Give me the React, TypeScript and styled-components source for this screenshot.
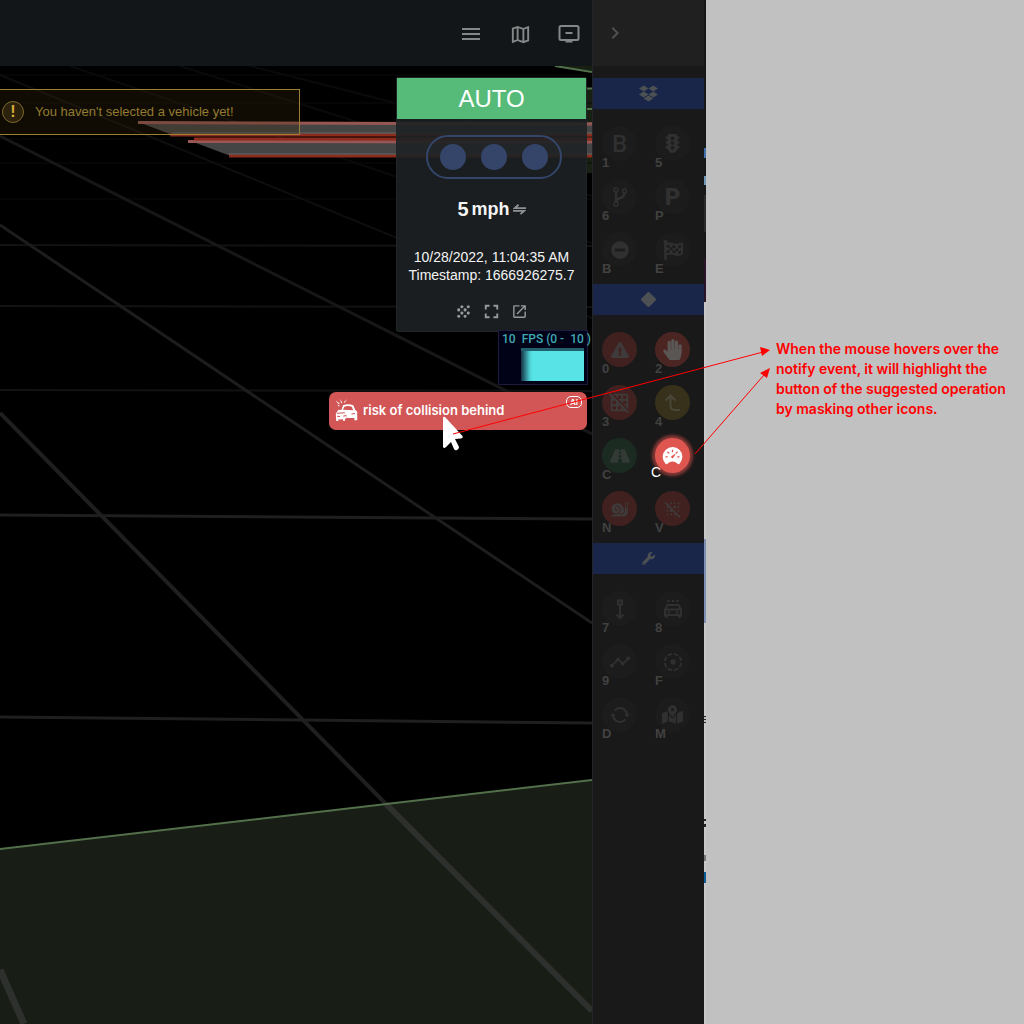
import React from 'react';
import styled, { createGlobalStyle, css } from 'styled-components';
import { MdMenu, MdOutlineMap, MdChevronRight, MdGrain, MdFullscreen, MdOpenInNew, MdGridOff, MdBlurOff, MdTimeline, MdFilterTiltShift } from 'react-icons/md';
import { FaDropbox, FaTrafficLight, FaMinusCircle, FaFlagCheckered, FaWrench, FaRoad, FaHandPaper, FaExclamationTriangle, FaMapMarkedAlt } from 'react-icons/fa';
import { BsDiamondFill } from 'react-icons/bs';
import { GiSnail } from 'react-icons/gi';
import { IoSpeedometer } from 'react-icons/io5';

const Global = createGlobalStyle`
  *, *::before, *::after { box-sizing: border-box; }
  body { margin: 0; background: #c1c1c1; font-family: "Liberation Sans", Arial, sans-serif; }
  button { padding: 0; border: 0; background: none; font: inherit; color: inherit; cursor: pointer; }
  svg { display: block; flex: none; }
`;

const Shell = styled.div`
  position: relative;
  display: grid;
  grid-template-columns: minmax(0, 1fr) 112px 2px 318px;
  min-height: 100vh;
  overflow: hidden;
`;

const Viewport = styled.main`
  position: relative;
  display: flex;
  flex-direction: column;
  background: #000;
  overflow: hidden;
`;

const Scene = styled.svg`
  position: absolute;
  inset: 0;
  width: 100%;
  height: 100%;
`;

const Toolbar = styled.header`
  position: relative;
  display: flex;
  align-items: center;
  justify-content: flex-end;
  gap: 25px;
  height: 66px;
  padding: 2px 11px 0 0;
  background: #121618;
  color: #858687;
`;

const ToolButton = styled.button`
  display: grid;
  place-items: center;
  width: 24px;
  height: 24px;
`;

const Hud = styled.div`
  position: relative;
  display: flex;
  justify-content: space-between;
  align-items: flex-start;
`;

const Warning = styled.div`
  display: flex;
  align-items: center;
  gap: 11px;
  width: 300px;
  height: 46px;
  margin-top: 23px;
  border: 1px solid #9a7f35;
  border-left: 0;
  background: rgba(58, 42, 12, 0.28);
  color: #947b31;
  font-size: 13px;
  line-height: 16px;
`;

const WarningMark = styled.span`
  display: grid;
  place-items: center;
  width: 22px;
  height: 22px;
  margin-left: 2px;
  border: 1px solid #7d682b;
  border-radius: 50%;
  background: #2b210c;
  color: #d9ae35;
  font-size: 16px;
  font-weight: 700;
`;

const Stack = styled.div`
  display: flex;
  flex-direction: column;
  align-items: flex-end;
  width: 260px;
  margin: 11px 5px 0 -228px;
`;

const StatusCard = styled.section`
  display: flex;
  flex-direction: column;
  align-items: center;
  width: 191px;
  height: 255px;
  border: 1px solid #202528;
  border-radius: 2px;
  background: rgba(29, 33, 35, 0.9);
  color: #f4f4f4;
`;

const Mode = styled.div`
  width: 100%;
  height: 41px;
  background: #56bb79;
  color: #fff;
  font-size: 24px;
  line-height: 41px;
  text-align: center;
`;

const Lamps = styled.div`
  display: flex;
  align-items: center;
  justify-content: center;
  gap: 15px;
  width: 136px;
  height: 44px;
  margin: 16px 0 0 4px;
  border: 2px solid #33466a;
  border-radius: 22px;
`;

const Lamp = styled.span`
  width: 26px;
  height: 26px;
  border-radius: 50%;
  background: #35456a;
`;

const Speed = styled.div`
  display: flex;
  align-items: center;
  gap: 3px;
  height: 24px;
  margin-top: 18px;
  font-size: 18px;
  font-weight: 700;
`;

const SpeedValue = styled.span`
  font-size: 20px;
`;

const Clock = styled.div`
  margin-top: 27px;
  font-size: 14px;
  line-height: 18px;
  text-align: center;
`;

const CardActions = styled.div`
  display: flex;
  align-items: center;
  gap: 4px;
  margin-top: 15px;
  color: #96989a;
`;

const CardAction = styled.button`
  display: grid;
  place-items: center;
  width: 24px;
  height: 24px;
`;

const Fps = styled.div`
  width: 90px;
  height: 55px;
  margin: -2px -1px 0 0;
  padding: 1px 3px 0;
  border: 1px solid #1d1b3c;
  background: #010118;
  color: #3fa9b1;
  font-family: Roboto, "Liberation Sans", sans-serif;
  font-size: 12px;
  font-weight: 500;
  line-height: 14px;
`;

const FpsLabel = styled.div`
  display: flex;
  gap: 6px;
  white-space: nowrap;
`;

const Meter = styled.div`
  width: 63px;
  height: 33px;
  margin: 2px 0 0 19px;
  border-top: 3px solid #23606e;
  background: linear-gradient(90deg, #123042, #4fd2d7 9px, #58e4e6 12px);
`;

const Notice = styled.button`
  display: flex;
  align-items: flex-start;
  width: 258px;
  height: 38px;
  margin: 7px 0 0;
  padding: 3px 5px 0 6px;
  border-radius: 7px;
  background: #d25656;
  color: #fff;
  font-family: Inter, "Liberation Sans", sans-serif;
  font-size: 13px;
  font-weight: 600;
  text-align: left;

  > svg { margin-top: 3px; }
`;

const NoticeText = styled.span`
  flex: 1;
  padding-left: 5px;
  line-height: 31px;
`;

const AiTag = styled.span`
  width: 16px;
  height: 12px;
  margin-top: 1px;
  border: 1px solid #fff;
  border-radius: 5px;
  font-size: 8px;
  line-height: 10px;
  text-align: center;
`;

const Sidebar = styled.aside`
  border-left: 1px solid #22252a;
  background: #191919;
`;

const SideTop = styled.div`
  display: flex;
  align-items: center;
  height: 66px;
  margin-bottom: 12px;
  padding-left: 10px;
  background: #202020;
  color: #505050;
`;

const SideHeading = styled.h2`
  display: grid;
  place-items: center;
  height: 31px;
  margin: 0;
  background: #19264a;
  color: #4d5154;
`;

const Keys = styled.div`
  display: grid;
  grid-template-columns: 35px 35px;
  grid-auto-rows: 35px;
  gap: 18px;
  padding: 17px 9px;
`;

type Tone = 'plain' | 'red' | 'hand' | 'gold' | 'green' | 'live';
const tones: Record<Tone, [string, string]> = {
  plain: ['#1c1c1c', '#303030'],
  red: ['#40211f', '#3e3b3a'],
  hand: ['#4b2522', '#5a5654'],
  gold: ['#37301a', '#494638'],
  green: ['#1b2b22', '#333a36'],
  live: ['#df5650', '#fff'],
};

const Key = styled.button<{ $tone: Tone }>`
  position: relative;
  display: grid;
  place-items: center;
  border-radius: 50%;
  background: ${p => tones[p.$tone][0]};
  color: ${p => tones[p.$tone][1]};
  ${p => p.$tone === 'live' && css`box-shadow: 0 0 3px 3px rgba(196, 76, 72, 0.62);`}
`;

const Hotkey = styled.kbd<{ $live?: boolean }>`
  position: absolute;
  left: 0;
  bottom: -9px;
  color: #414141;
  font: 700 13px/15px "Liberation Sans", Arial, sans-serif;
  ${p => p.$live && css`
    left: -4px;
    bottom: -7px;
    color: #fff;
    font-weight: 400;
    font-size: 14px;
  `}
`;

const Letter = styled.span<{ $bold?: boolean }>`
  font: ${p => (p.$bold ? 900 : 500)} 24px/28px Roboto, sans-serif;
`;

const PageEdge = styled.div`
  background:
    linear-gradient(#0b5c94, #0b5c94) 0 872px / 2px 11px no-repeat,
    linear-gradient(#777, #777) 0 855px / 2px 6px no-repeat,
    linear-gradient(#222 2px, transparent 2px 5px, #222 5px) 0 819px / 2px 8px no-repeat,
    linear-gradient(#222 1px, #c1c1c1 1px 3px, #222 3px 4px, #c1c1c1 4px 6px, #222 6px) 0 716px / 2px 7px no-repeat,
    linear-gradient(#3f6fa8, #3f6fa8) 0 148px / 2px 10px no-repeat,
    linear-gradient(#6f97b8, #6f97b8) 0 176px / 2px 9px no-repeat,
    linear-gradient(#171717 195px, #2a2a2a 195px 232px, #171717 232px 258px, #2a1427 258px 302px, #c8c8c8 302px 539px, #7e90b4 539px 623px, #c8c8c8 623px);
`;

const NotePanel = styled.section`
  padding: 339px 0 0 70px;
  background: #c1c1c1;
`;

const Note = styled.p`
  width: 240px;
  margin: 0;
  color: #f00;
  font-family: Inter, "Liberation Sans", sans-serif;
  font-size: 14px;
  font-weight: 600;
  line-height: 20px;
`;

const Arrows = styled.svg`
  position: absolute;
  top: 0;
  right: 0;
  width: 1024px;
  height: 1024px;
  pointer-events: none;
`;

const ScreenIcon = () => (
  <svg width="22" height="22" viewBox="0 0 22 22" fill="none" stroke="currentColor" strokeWidth="2">
    <rect x="1.5" y="3" width="19" height="14" rx="1.5" /><path d="M7.5 10h7" /><path d="M7.5 18.5h7" />
  </svg>
);

const SwapIcon = () => (
  <svg width="13" height="12" viewBox="0 0 14 12" fill="none" stroke="#8e9294" strokeWidth="2">
    <path d="M14 5H2l4-3.500M0 8h12L8 11.500" />
  </svg>
);

const BranchIcon = () => (
  <svg width="14" height="20" viewBox="0 0 14 20" fill="none" stroke="currentColor">
    <g strokeWidth="1.500"><circle cx="3" cy="3" r="2" /><circle cx="11.500" cy="4" r="2" /><circle cx="3" cy="17" r="2" /></g>
    <path d="M3 5v10M11.500 6.500Q11 10 7 11.200 3.600 12.300 3 15" strokeWidth="2.400" />
  </svg>
);

const RouteIcon = () => (
  <svg width="20" height="22" viewBox="0 0 20 22" fill="none" stroke="currentColor" strokeWidth="2">
    <path d="M8 2.500h4v4H8zM10 7v13M6.500 16.500 10 20l3.500-3.500" />
  </svg>
);

const TurnIcon = () => (
  <svg width="20" height="20" viewBox="0 0 20 20" fill="none" stroke="currentColor" strokeWidth="2">
    <path d="M2.500 7.500 7.500 2.500l5 5M7.500 2.500v10q0 4.500 4.500 4.500h5" />
  </svg>
);

const CarIcon = () => (
  <svg width="20" height="20" viewBox="0 0 20 20" fill="none" stroke="currentColor" strokeWidth="2">
    <path d="M2 17.500V10.500L4.500 6h11L18 10.500v7M2 10.500h16M2 16h16M3.500 16v3M16.500 16v3" />
    <g fill="currentColor" stroke="none">
      <circle cx="5.500" cy="2" r="1.300" /><circle cx="10" cy="2" r="1.300" /><circle cx="14.500" cy="2" r="1.300" />
      <circle cx="5.800" cy="13.200" r="1.300" /><circle cx="14.200" cy="13.200" r="1.300" />
    </g>
  </svg>
);

const SyncIcon = () => (
  <svg width="20" height="20" viewBox="0 0 512 512" fill="none" stroke="currentColor" strokeWidth="54">
    <path d="M435 270v-14C435 157 354 76 256 76a179 179 0 0 0-140 67M77 242v14c0 99 81 180 179 180a180 180 0 0 0 140-68" />
    <path d="M10 276 77 198l67 78ZM502 236l-67 78-67-78Z" fill="currentColor" stroke="none" />
  </svg>
);

const CrashIcon = () => (
  <svg width="23" height="24" viewBox="0 0 23 24" fill="currentColor">
    <path d="M.5 2.200 4.700 5.500 3.600 6.300ZM5.300.8 7.300 5.200 5.900 5ZM12.300 1 9.500 4.800 8.600 4.200ZM2.300 6.800 5 7.500 3.700 8.600Z" />
    <path fillRule="evenodd" d="M8 7.300Q13 5 18.300 7.300l1.900 4.500 2 2v8.400h-2.800V20H12l-1-5-4.800-2.600ZM9.300 8.700 8 11.800l10.200.4-1.400-3.500Q13 7.300 9.300 8.700Z" />
    <path d="M.8 15.500 3.500 11.800 9.500 12.200l2.300 3.300-.2 4.700-1.600.5v2H8v-1.500L3.300 21.500V23H1.200Z" />
    <path d="M1.800 15.200 9.800 14.800M2 18.200l3 .3M8.300 18.300l3-.8M16.500 16l3.500-.5" stroke="#d25656" strokeWidth="1.100" />
  </svg>
);

type KeyDef = [string, React.ReactNode, Tone, string];

const driveKeys: KeyDef[] = [
  ['1', <Letter>B</Letter>, 'plain', 'Brake'],
  ['5', <FaTrafficLight size={19} />, 'plain', 'Traffic light'],
  ['6', <BranchIcon />, 'plain', 'Branch'],
  ['P', <Letter $bold>P</Letter>, 'plain', 'Park'],
  ['B', <FaMinusCircle size={18} />, 'plain', 'Block'],
  ['E', <FaFlagCheckered size={20} />, 'plain', 'Finish'],
];

const assistKeys: KeyDef[] = [
  ['0', <FaExclamationTriangle size={18} />, 'red', 'Hazard'],
  ['2', <FaHandPaper size={21} />, 'hand', 'Stop'],
  ['3', <MdGridOff size={21} />, 'red', 'Grid off'],
  ['4', <TurnIcon />, 'gold', 'Turn'],
  ['C', <FaRoad size={20} />, 'green', 'Road'],
  ['C', <IoSpeedometer size={21} />, 'live', 'Change speed'],
  ['N', <GiSnail size={20} />, 'red', 'Slow'],
  ['V', <MdBlurOff size={22} />, 'red', 'Blur off'],
];

const toolKeys: KeyDef[] = [
  ['7', <RouteIcon />, 'plain', 'Route'],
  ['8', <CarIcon />, 'plain', 'Car'],
  ['9', <MdTimeline size={22} />, 'plain', 'Timeline'],
  ['F', <MdFilterTiltShift size={22} />, 'plain', 'Focus'],
  ['D', <SyncIcon />, 'plain', 'Sync'],
  ['M', <FaMapMarkedAlt size={21} />, 'plain', 'Map'],
];

const KeyGroup = ({ keys }: { keys: KeyDef[] }) => (
  <Keys>
    {keys.map(([hotkey, icon, tone, label]) => (
      <Key key={label} $tone={tone} aria-label={label}>
        {icon}
        <Hotkey $live={tone === 'live'}>{hotkey}</Hotkey>
      </Key>
    ))}
  </Keys>
);

const SceneLines = () => (
  <Scene viewBox="0 0 592 1024" preserveAspectRatio="xMaxYMin slice" aria-hidden="true">
    <path d="M0 849 592 780V1024H0Z" fill="#181e15" />
    <path d="M555 66 592 71V66ZM586 88h6v85h-6Z" fill="#182014" />
    <g fill="none">
      <path d="M0 75H592M0 103H592M0 139H592M0 163H592M0 199H592" stroke="#0a0a0a" />
      <path d="M0 245 592 246M0 306 592 307M0 390 592 391" stroke="#121212" strokeWidth="2" />
      <path d="M0 515 592 519M0 717 592 723" stroke="#1f1f1f" strokeWidth="3" />
      <path d="M180 66 592 196M70 66 592 243M250 66 592 153" stroke="#0a0a0a" strokeWidth="2" />
      <path d="M0 75 592 318" stroke="#0e0e0e" strokeWidth="2" />
      <path d="M0 136 592 434" stroke="#171717" strokeWidth="3" />
      <path d="M0 225 592 623" stroke="#1d1d1d" strokeWidth="3" />
      <path d="M0 413 386 804" stroke="#1f1f1f" strokeWidth="4" />
      <path d="M386 804 592 1011" stroke="#2e302d" strokeWidth="6" />
      <path d="M0 970 24 1024" stroke="#2e302d" strokeWidth="7" />
    </g>
    <path d="M0 849 592 780M555 66 592 72M586 88.500h6M586 109h6" fill="none" stroke="#52704a" strokeWidth="2" />
    <path d="M138 122H592V134H170Z M188 140H592V155H228Z" fill="#454545" />
    <path d="M138 122.500 592 124M188 141.500 592 142" stroke="#985754" strokeWidth="3" />
    <path d="M170 135H592M194 139H592M229 156H592" stroke="#8d2b1d" strokeWidth="3" />
    <path d="M172 133H592M229 154H592" stroke="#686868" />
  </Scene>
);

export default function App() {
  return (
    <Shell>
      <Global />
      <Viewport>
        <SceneLines />
        <Toolbar>
          <ToolButton aria-label="Menu"><MdMenu size={24} /></ToolButton>
          <ToolButton aria-label="Map"><MdOutlineMap size={23} /></ToolButton>
          <ToolButton aria-label="Screen"><ScreenIcon /></ToolButton>
        </Toolbar>
        <Hud>
          <Warning role="status"><WarningMark>!</WarningMark>You haven't selected a vehicle yet!</Warning>
          <Stack>
            <StatusCard>
              <Mode>AUTO</Mode>
              <Lamps><Lamp /><Lamp /><Lamp /></Lamps>
              <Speed><SpeedValue>5</SpeedValue>mph<SwapIcon /></Speed>
              <Clock>10/28/2022, 11:04:35 AM<br />Timestamp: 1666926275.7</Clock>
              <CardActions>
                <CardAction aria-label="Points"><MdGrain size={19} /></CardAction>
                <CardAction aria-label="Full screen"><MdFullscreen size={23} /></CardAction>
                <CardAction aria-label="Open"><MdOpenInNew size={17} /></CardAction>
              </CardActions>
            </StatusCard>
            <Fps><FpsLabel><span>10</span><span>FPS (0 -</span><span>10 )</span></FpsLabel><Meter /></Fps>
            <Notice><CrashIcon /><NoticeText>risk of collision behind</NoticeText><AiTag>AI</AiTag></Notice>
          </Stack>
        </Hud>
      </Viewport>
      <Sidebar>
        <SideTop><button aria-label="Collapse"><MdChevronRight size={24} /></button></SideTop>
        <SideHeading><FaDropbox size={19} /></SideHeading>
        <KeyGroup keys={driveKeys} />
        <SideHeading><BsDiamondFill size={15} /></SideHeading>
        <KeyGroup keys={assistKeys} />
        <SideHeading><FaWrench size={13} /></SideHeading>
        <KeyGroup keys={toolKeys} />
      </Sidebar>
      <PageEdge />
      <NotePanel>
        <Note>When the mouse hovers over the notify event, it will highlight the button of the suggested operation by masking other icons.</Note>
      </NotePanel>
      <Arrows viewBox="0 0 1024 1024" aria-hidden="true">
        <path d="M443 418v29q1 2 3 0l5-5 3 7q1 2 3 1t2-3l-4-8 6-.5q3-1 1-3L445 417q-2-1-2 1Z" fill="#fff" />
        <path d="M453 434 763 352M695 454 764 375" stroke="#f00" fill="none" />
        <path d="M770 350 760 347 762 356ZM770 368 760 373 767 378Z" fill="#f00" />
      </Arrows>
    </Shell>
  );
}
